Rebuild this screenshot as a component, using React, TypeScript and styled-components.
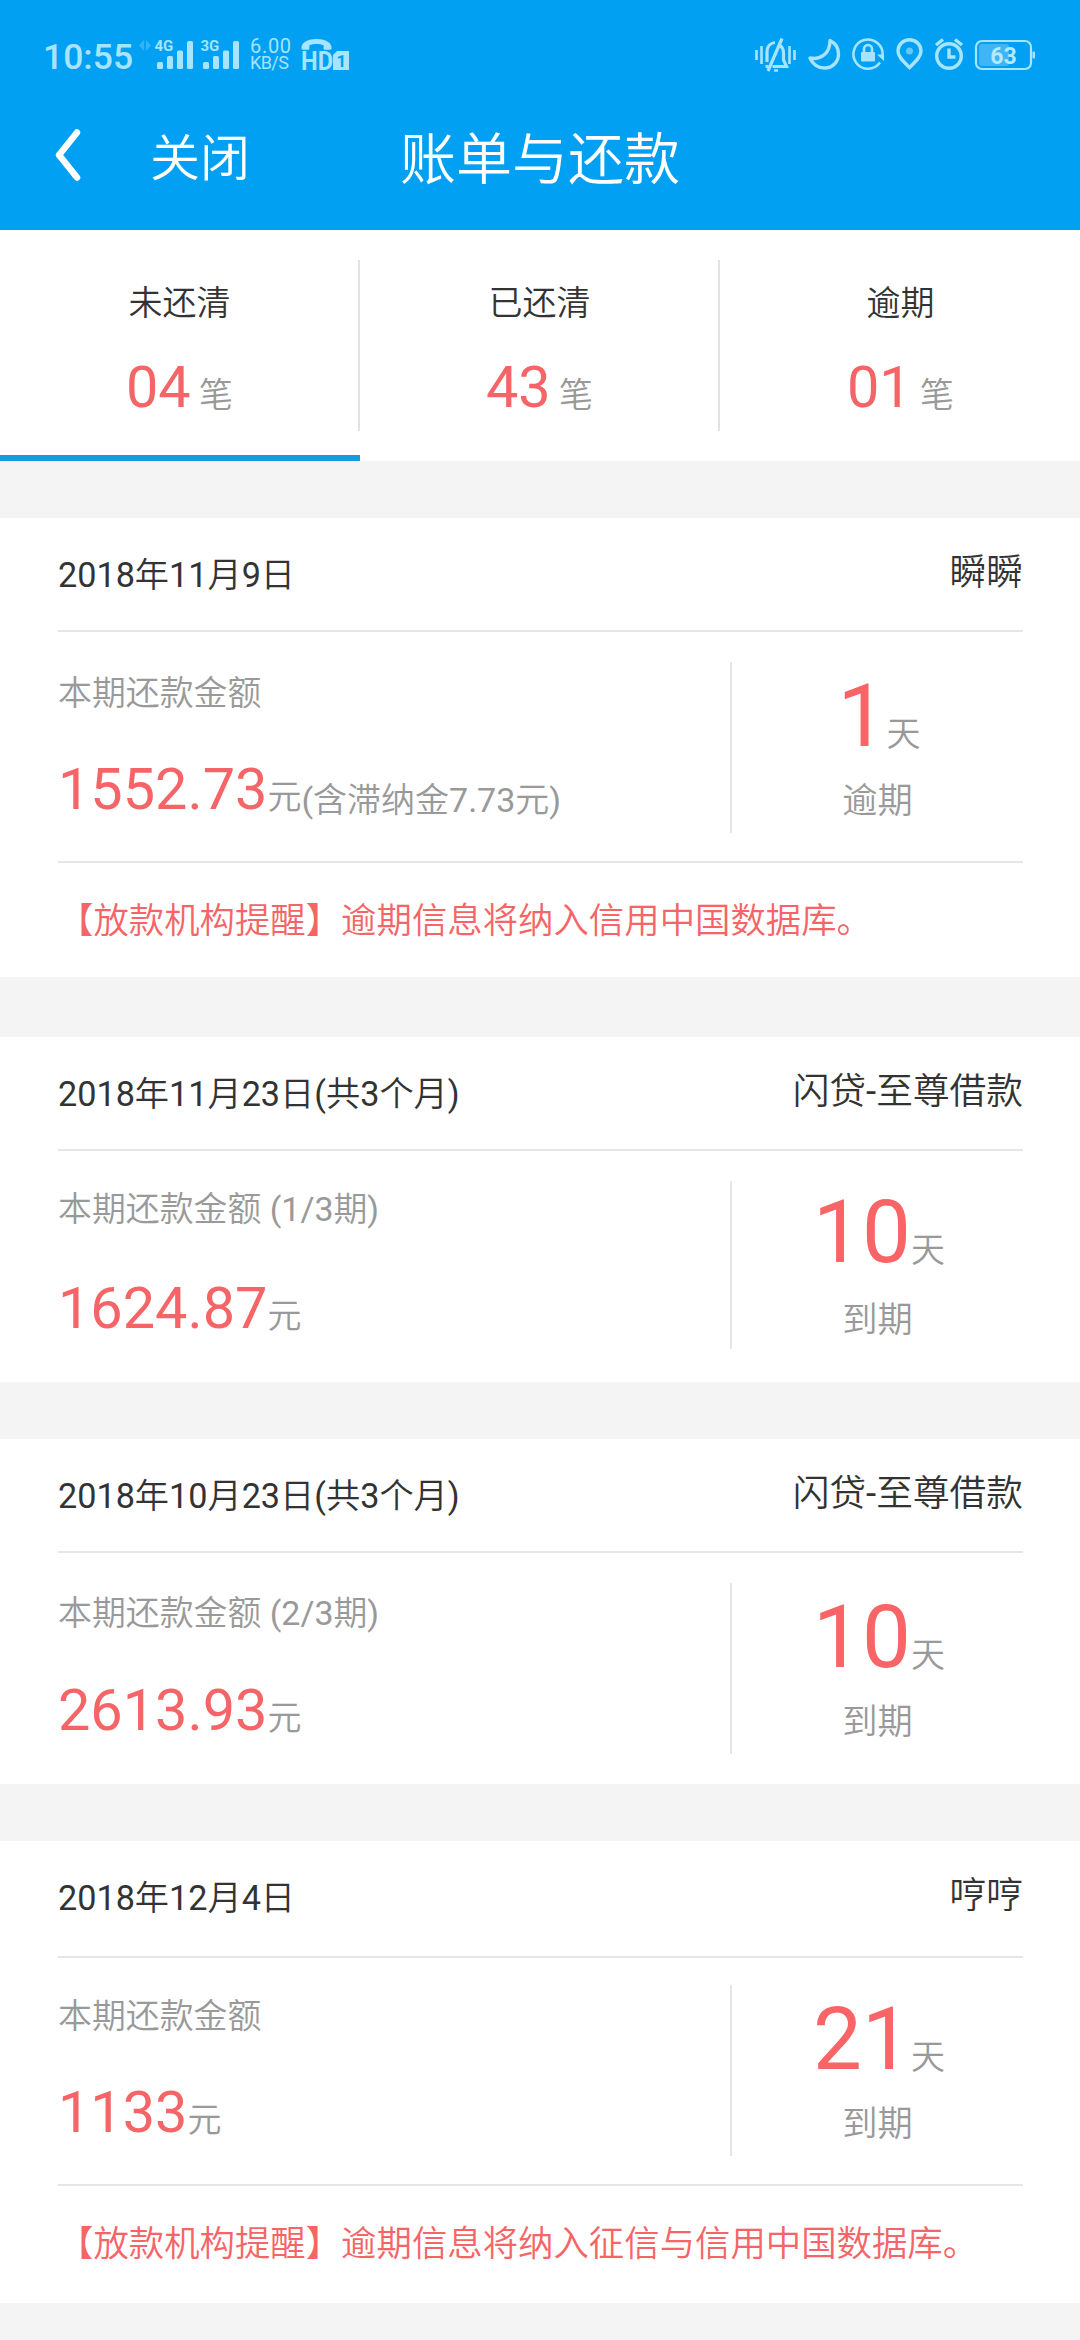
import React from "react";
import styled, { createGlobalStyle } from "styled-components";

const GlobalStyle = createGlobalStyle`
  * {
    box-sizing: border-box;
  }
  body {
    margin: 0;
    background-color: #f4f4f4;
    font-family: Roboto, "Noto Sans CJK SC DemiLight", "Noto Sans CJK SC", sans-serif;
    color: #333;
  }
`;

const STATUS = "#a6e4ff";

const Page = styled.div`
  width: 1080px;
  height: 2340px;
  overflow: hidden;
  background-color: #f4f4f4;
`;

const Header = styled.header`
  height: 230px;
  background-color: #01a0f2;
`;

const StatusBar = styled.div`
  display: flex;
  align-items: flex-start;
  height: 80px;
  padding: 36px 45px 0 43px;
  color: ${STATUS};
  svg {
    display: block;
    flex: none;
    overflow: visible;
  }
`;

const Clock = styled.span`
  width: 96px;
  font-size: 35.5px;
  font-weight: 500;
  line-height: 42px;
`;

const Signals = styled.div`
  display: flex;
  gap: 8px;
  margin-left: 4px;
`;

const Speed = styled.div`
  display: flex;
  flex-direction: column;
  width: 41px;
  margin: 3px 10px 0 11px;
  font-size: 20px;
  line-height: 15px;
  letter-spacing: 0.7px;
  span + span {
    font-size: 18px;
    line-height: 18px;
    letter-spacing: -0.6px;
  }
`;

const StatusIcons = styled.div`
  display: flex;
  gap: 12px;
  margin: 2px 0 0 auto;
`;

const NavBar = styled.nav`
  display: grid;
  grid-template-columns: 1fr auto 1fr;
  height: 150px;
  line-height: 159px;
  color: #fff;
`;

const NavLeft = styled.div`
  display: flex;
  font-size: 50px;
  svg {
    display: block;
    margin: 48px 69px 0 54px;
  }
`;

const Title = styled.h1`
  margin: 0;
  font-size: 56px;
  font-weight: 400;
  line-height: 160px;
`;

const Tabs = styled.div`
  display: grid;
  grid-template-columns: repeat(3, 1fr);
  height: 231px;
  background-color: #fff;
`;

const Tab = styled.div<{ $active?: boolean }>`
  padding-top: 30px;
  border-bottom: 6px solid ${(props) => (props.$active ? "#149cdd" : "transparent")};
  &:not(:last-child) > div {
    border-right: 2px solid #e2e2e2;
  }
`;

const TabBody = styled.div`
  height: 171px;
  padding: 19px 0 0 1px;
  text-align: center;
`;

const TabLabel = styled.div`
  margin-bottom: 25px;
  font-size: 34px;
  line-height: 48px;
`;

const Figure = styled.div`
  font-size: 57.6px;
  line-height: 72px;
  color: #f56567;
`;

const Unit = styled.span`
  font-size: 34px;
  line-height: 1;
  color: #999;
`;

const LateFee = styled(Unit)`
  vertical-align: -3px;
`;

const Card = styled.section<{ $gap: number }>`
  margin-top: ${(props) => props.$gap}px;
  padding: 0 57px 0 58px;
  background-color: #fff;
`;

const CardHead = styled.div<{ $height: number }>`
  display: flex;
  justify-content: space-between;
  height: ${(props) => props.$height}px;
  border-bottom: 2px solid #e6e6e6;
`;

const BillDate = styled.span`
  font-size: 34.2px;
  line-height: 115px;
`;

const Product = styled.span`
  font-size: 36.7px;
  line-height: 110px;
`;

const CardBody = styled.div<{ $top: number; $ruled: boolean }>`
  display: flex;
  height: ${(props) => props.$top + 201}px;
  padding-top: ${(props) => props.$top}px;
  border-bottom: ${(props) => (props.$ruled ? "2px solid #e6e6e6" : "none")};
`;

const Amount = styled.div`
  width: 672px;
  white-space: nowrap;
`;

const AmountLabel = styled.div<{ $top: number }>`
  height: 92px;
  padding-top: ${(props) => props.$top}px;
  font-size: 33.9px;
  line-height: 50px;
  color: #999;
`;

const Due = styled.div<{ $height: number }>`
  flex: 1;
  height: ${(props) => props.$height}px;
  border-left: 2px solid #e6e6e6;
  text-align: center;
`;

const Days = styled.div<{ $top: number }>`
  height: 118px;
  padding: ${(props) => props.$top}px 0 0 3px;
  font-size: 87px;
  line-height: 90px;
  color: #f96466;
`;

const DueState = styled.div`
  font-size: 35.3px;
  line-height: 42px;
  color: #999;
`;

const Notice = styled.div<{ $height: number }>`
  height: ${(props) => props.$height}px;
  font-size: 35.4px;
  line-height: 116px;
  white-space: nowrap;
  color: #f56567;
`;

const tabs = [
  { label: "未还清", count: "04" },
  { label: "已还清", count: "43" },
  { label: "逾期", count: "01" },
];

interface Bill {
  date: string;
  product: string;
  label: string;
  amount: string;
  lateFee?: string;
  days: number;
  state: string;
  notice?: string;
  gap: number;
  headHeight: number;
  bodyTop: number;
  labelTop: number;
  daysTop: number;
  lineHeight: number;
  noticeHeight?: number;
}

const bills: Bill[] = [
  {
    date: "2018年11月9日",
    product: "瞬瞬",
    label: "本期还款金额",
    amount: "1552.73",
    lateFee: "(含滞纳金7.73元)",
    days: 1,
    state: "逾期",
    notice: "【放款机构提醒】逾期信息将纳入信用中国数据库。",
    gap: 57,
    headHeight: 114,
    bodyTop: 30,
    labelTop: 7,
    daysTop: 9,
    lineHeight: 171,
    noticeHeight: 114,
  },
  {
    date: "2018年11月23日(共3个月)",
    product: "闪贷-至尊借款",
    label: "本期还款金额 (1/3期)",
    amount: "1624.87",
    days: 10,
    state: "到期",
    gap: 60,
    headHeight: 114,
    bodyTop: 30,
    labelTop: 4,
    daysTop: 6,
    lineHeight: 168,
  },
  {
    date: "2018年10月23日(共3个月)",
    product: "闪贷-至尊借款",
    label: "本期还款金额 (2/3期)",
    amount: "2613.93",
    days: 10,
    state: "到期",
    gap: 57,
    headHeight: 114,
    bodyTop: 30,
    labelTop: 6,
    daysTop: 9,
    lineHeight: 171,
  },
  {
    date: "2018年12月4日",
    product: "哼哼",
    label: "本期还款金额",
    amount: "1133",
    days: 21,
    state: "到期",
    notice: "【放款机构提醒】逾期信息将纳入征信与信用中国数据库。",
    gap: 57,
    headHeight: 117,
    bodyTop: 27,
    labelTop: 7,
    daysTop: 9,
    lineHeight: 171,
    noticeHeight: 117,
  },
];

function SignalIcon({ type }: { type: string }) {
  return (
    <svg width="38" height="34" viewBox="0 0 38 34" fill={STATUS}>
      <text x="-0.5" y="15" fontSize="15" fontWeight="700" fontFamily="Roboto">
        {type}
      </text>
      <rect x="2" y="26" width="6" height="7" rx="1.5" />
      <rect x="12" y="20" width="6" height="13" rx="1.5" />
      <rect x="22" y="14.5" width="6" height="18.5" rx="1.5" />
      <rect x="32" y="5" width="6" height="28" rx="1.5" />
    </svg>
  );
}

function HdIcon() {
  return (
    <svg width="48" height="34" viewBox="0 0 48 34" fill={STATUS}>
      <path d="M0.5 12.5c-.6-5 4.5-9.500 15-9.500s15.600 4.500 15 9.500c0 .8-.6 1.200-1.400 1.200h-5.200c-.8 0-1.300-.5-1.300-1.300V9.300c-4-1.700-10.200-1.700-14.200 0v3.100c0 .8-.5 1.300-1.300 1.300H1.900c-.8 0-1.400-.4-1.400-1.200z" />
      <text x="0" y="34" fontSize="25" fontWeight="700" fontFamily="Roboto" textLength="32" lengthAdjust="spacingAndGlyphs">
        HD
      </text>
      <path d="M36 15h12v19H32V19z" />
      <text x="35.5" y="31" fontSize="17" fontWeight="700" fontFamily="Roboto" fill="#01a0f2">
        1
      </text>
    </svg>
  );
}

function BellOffIcon() {
  return (
    <svg width="41" height="34" viewBox="0 0 41 34" fill="none" stroke={STATUS} strokeWidth="2.6">
      <path d="M1.5 12v10M6.500 8v18M34.500 8v18M39.500 12v10" />
      <path d="M12 24V14c0-5 3-9 8-9.500M10.500 28.500h3M24 7c3 1.500 4.500 4 4.500 8v7l3 6.500H17.500" strokeWidth="3.2" />
      <path d="M27 .5L13 33" strokeWidth="3.2" />
      <path d="M19 32.500h4" strokeWidth="2.5" />
    </svg>
  );
}

function MoonIcon() {
  return (
    <svg width="32" height="32" viewBox="0 0 32 32" fill="none" stroke={STATUS} strokeWidth="3.4" strokeLinejoin="round">
      <path d="M22 2.500c5 2.500 8.500 7.500 8.500 13.500C30.500 24 24.500 30 16.500 30 10 30 4.500 26 2 20c9 2 20-3 20-17.500z" />
    </svg>
  );
}

function RotationLockIcon() {
  return (
    <svg width="32" height="32" viewBox="0 0 32 32" fill="none" stroke={STATUS} strokeWidth="2.6">
      <path d="M28 24.500A14.600 14.600 0 1 1 30.600 17" />
      <path d="M25 16.500h7v6.500z" fill={STATUS} stroke="none" />
      <rect x="9" y="14" width="14" height="9.5" rx="1" fill={STATUS} stroke="none" />
      <path d="M12 14.500v-3.500a4 4 0 0 1 8 0v3.500" />
    </svg>
  );
}

function PinIcon() {
  return (
    <svg width="27" height="32" viewBox="0 0 27 32" fill="none" stroke={STATUS} strokeWidth="3.4">
      <path d="M13.5 29.500C8 24 2 19 2 13a11.500 11.200 0 0 1 23 0c0 6-6 11-11.500 16.500z" />
      <circle cx="13.5" cy="13" r="3.5" fill={STATUS} stroke="none" opacity="0.6" />
    </svg>
  );
}

function AlarmIcon() {
  return (
    <svg width="28" height="32" viewBox="0 0 28 32" fill="none" stroke={STATUS} strokeWidth="3.4">
      <circle cx="14" cy="18" r="12.3" />
      <path d="M14 10.500V19h6.500" />
      <path d="M1 7l7-5.500M27 7l-7-5.500" />
    </svg>
  );
}

function BatteryIcon() {
  return (
    <svg width="60" height="32" viewBox="0 0 60 32">
      <rect x="1" y="3" width="55" height="28" rx="6" fill="none" stroke={STATUS} strokeWidth="2.2" />
      <rect x="4" y="6" width="30" height="22" rx="3" fill="#3db5f7" />
      <rect x="57.5" y="13.5" width="2.5" height="7" rx="1" fill={STATUS} />
      <text x="28.5" y="25.5" textAnchor="middle" fontSize="23" fontWeight="700" fontFamily="Roboto" fill="#b4e9ff">
        63
      </text>
    </svg>
  );
}

function BillCard({ bill }: { bill: Bill }) {
  return (
    <Card $gap={bill.gap}>
      <CardHead $height={bill.headHeight}>
        <BillDate>{bill.date}</BillDate>
        <Product>{bill.product}</Product>
      </CardHead>
      <CardBody $top={bill.bodyTop} $ruled={!!bill.notice}>
        <Amount>
          <AmountLabel $top={bill.labelTop}>{bill.label}</AmountLabel>
          <Figure>
            {bill.amount}
            <Unit>元</Unit>
            {bill.lateFee && <LateFee>{bill.lateFee}</LateFee>}
          </Figure>
        </Amount>
        <Due $height={bill.lineHeight}>
          <Days $top={bill.daysTop}>
            {bill.days}
            <Unit>天</Unit>
          </Days>
          <DueState>{bill.state}</DueState>
        </Due>
      </CardBody>
      {bill.notice && (
        <Notice $height={bill.noticeHeight ?? 114}>{bill.notice}</Notice>
      )}
    </Card>
  );
}

export default function App() {
  return (
    <Page>
      <GlobalStyle />
      <Header>
        <StatusBar>
          <Clock>10:55</Clock>
          <svg width="12" height="20" viewBox="0 0 12 20" fill={STATUS} opacity="0.3">
            <path d="M5 4v11L0 9.500zM7 4v11l5-5.500z" />
          </svg>
          <Signals>
            <SignalIcon type="4G" />
            <SignalIcon type="3G" />
          </Signals>
          <Speed>
            <span>6.00</span>
            <span>KB/S</span>
          </Speed>
          <HdIcon />
          <StatusIcons>
            <BellOffIcon />
            <MoonIcon />
            <RotationLockIcon />
            <PinIcon />
            <AlarmIcon />
            <BatteryIcon />
          </StatusIcons>
        </StatusBar>
        <NavBar>
          <NavLeft>
            <svg width="27" height="54" viewBox="0 0 27 54" fill="none" stroke="#fff" strokeWidth="6.5" strokeLinecap="round" strokeLinejoin="round">
              <path d="M23 4.500L5 27l18 22.500" />
            </svg>
            <span>关闭</span>
          </NavLeft>
          <Title>账单与还款</Title>
        </NavBar>
      </Header>
      <Tabs>
        {tabs.map((tab, i) => (
          <Tab key={tab.label} $active={i === 0}>
            <TabBody>
              <TabLabel>{tab.label}</TabLabel>
              <Figure>
                {tab.count}
                <Unit> 笔</Unit>
              </Figure>
            </TabBody>
          </Tab>
        ))}
      </Tabs>
      {bills.map((bill) => (
        <BillCard key={bill.date} bill={bill} />
      ))}
    </Page>
  );
}
